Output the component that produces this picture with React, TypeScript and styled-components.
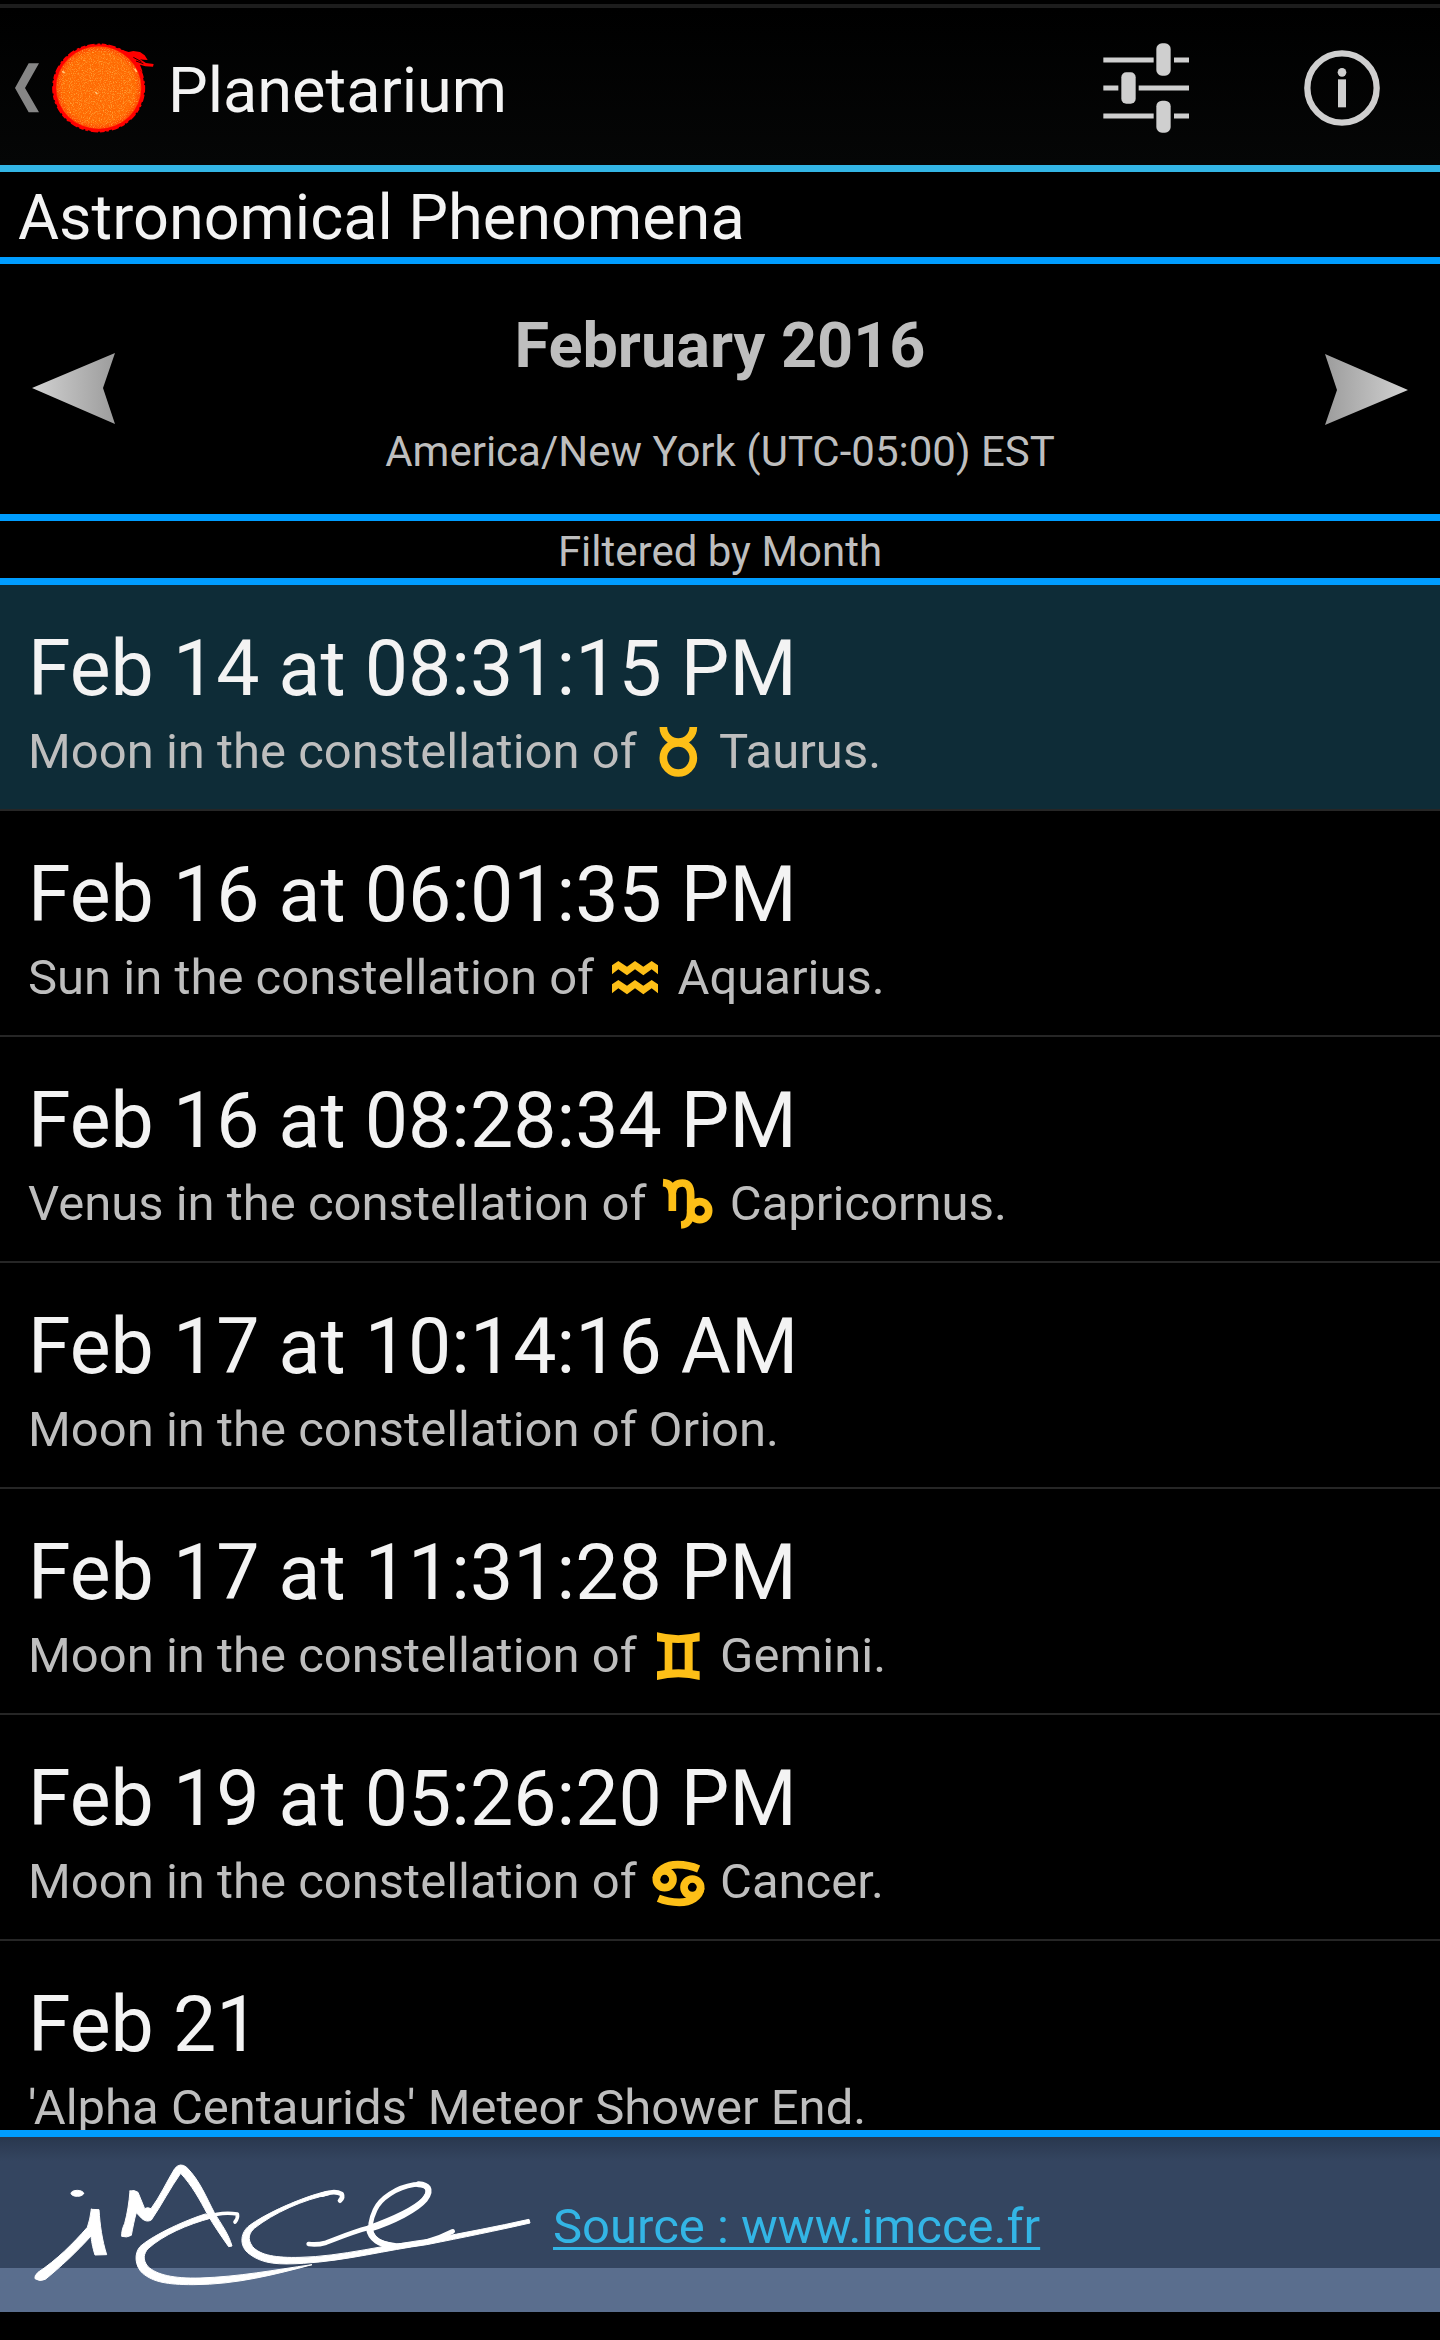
import React from "react";
import styled, { createGlobalStyle } from "styled-components";

const GlobalStyle = createGlobalStyle`
  * {
    box-sizing: border-box;
  }
  body {
    margin: 0;
    background: #000;
    font-family: Roboto, "Noto Sans", sans-serif;
    color: #f3f3f3;
  }
  button {
    margin: 0;
    padding: 0;
    border: 0;
    background: none;
    color: inherit;
    font: inherit;
    cursor: pointer;
  }
  h1, h2, h3, p, ul {
    margin: 0;
    padding: 0;
    font-weight: 400;
  }
  svg {
    display: block;
    flex: none;
  }
`;

const rule = "7px solid #009dff";

const Screen = styled.div`
  display: flex;
  flex-direction: column;
  height: 100vh;
  padding: 4px 0 28px;
`;

const AppBar = styled.header`
  display: flex;
  align-items: center;
  flex: none;
  height: 168px;
  padding-top: 2px;
  border-top: 4px solid #1d1d1d;
  border-bottom: 7px solid #33b5e5;
  background: linear-gradient(#000, #050606);
`;

const BackButton = styled.button`
  display: flex;
  align-items: center;
  gap: 12px;
`;

const AppTitle = styled.h1`
  padding-top: 7px;
  font-size: 63px;
  line-height: 74px;
`;

const Actions = styled.div`
  display: flex;
  align-self: stretch;
  margin-left: auto;
`;

const ActionButton = styled.button`
  display: flex;
  align-items: center;
  justify-content: center;
  width: 196px;
`;

const SectionTitle = styled.h2`
  flex: none;
  padding: 7px 18px 0;
  border-bottom: ${rule};
  font-size: 63px;
  line-height: 78px;
`;

const MonthBar = styled.nav`
  display: flex;
  align-items: center;
  justify-content: space-between;
  flex: none;
  padding: 0 32px;
  border-bottom: ${rule};
  color: #bebebe;
`;

const MonthText = styled.div`
  display: flex;
  flex-direction: column;
  gap: 44px;
  padding: 45px 0 37px;
  text-align: center;
`;

const Month = styled.h3`
  font-size: 63px;
  font-weight: 700;
  line-height: 74px;
`;

const Zone = styled.p`
  font-size: 42px;
  line-height: 50px;
`;

const FilterNote = styled.p`
  flex: none;
  padding-top: 4px;
  border-bottom: ${rule};
  color: #bebebe;
  font-size: 42px;
  line-height: 53px;
  text-align: center;
`;

const EventList = styled.ul`
  flex: 1;
  min-height: 0;
  overflow: hidden;
  list-style: none;
`;

const EventItem = styled.li`
  border-bottom: 2px solid #262626;
`;

const EventButton = styled.button<{ $selected?: boolean }>`
  display: flex;
  flex-direction: column;
  gap: 9px;
  width: 100%;
  padding: 39px 28px 28px;
  background: ${(p) => (p.$selected ? "#0e2c37" : "transparent")};
  text-align: left;
`;

const When = styled.span`
  font-size: 77px;
  line-height: 90px;
`;

const What = styled.span`
  color: #bebebe;
  font-size: 49px;
  line-height: 58px;
`;

const Glyph = styled.svg`
  display: inline-block;
  width: 59px;
  height: 58px;
  margin: -4px 0;
  vertical-align: -8px;
  color: #fdbf17;
`;

const Footer = styled.footer`
  display: flex;
  align-items: center;
  gap: 18px;
  flex: none;
  height: 182px;
  padding-left: 20px;
  border-top: ${rule};
  background: linear-gradient(
    #29374e 0,
    #344560 24px,
    #344560 131px,
    #5a6e8e 131px
  );
`;

const SourceLink = styled.a`
  padding-top: 4px;
  color: #33b5e5;
  font-size: 49px;
  line-height: 58px;
  text-decoration: underline;
  text-decoration-thickness: 3px;
  text-decoration-skip-ink: none;
  text-underline-offset: 4px;
`;

function BackAndSun() {
  return (
    <svg width="156" height="115" viewBox="0 0 468 345" aria-hidden="true">
      <defs>
        <filter id="grain" x="0" y="0" width="1" height="1">
          <feTurbulence type="fractalNoise" baseFrequency="0.3" numOctaves="2" seed="4" />
          <feColorMatrix values="0 0 0 0 1  0 0 0 0 0.58  0 0 0 0 0.1  1.8 0 0 0 -0.85" />
          <feComposite in2="SourceGraphic" operator="in" />
        </filter>
        <radialGradient id="disc">
          <stop offset="0" stopColor="#ff6a04" />
          <stop offset="0.85" stopColor="#ff6a02" />
          <stop offset="1" stopColor="#ff4600" />
        </radialGradient>
      </defs>
      <path d="M86 100h31L75 174l42 73H86L45 174z" fill="#868686" />
      <ellipse cx="296" cy="174" rx="137" ry="131" fill="#f00" />
      <ellipse
        cx="296"
        cy="174"
        rx="137"
        ry="131"
        fill="none"
        stroke="#f00"
        strokeWidth="5"
        strokeDasharray="14 6 22 9 8 5"
      />
      <path
        d="M330 47L360 58L386 66L400 63L420 66L434 76L443 90L430 89L420 88L438 99L461 102L459 110L436 109L420 104L428 125L400 110z"
        fill="#f00"
      />
      <path d="M400 82L424 95M408 93L430 101" stroke="#200" strokeWidth="3" fill="none" />
      <ellipse cx="296" cy="173" rx="128" ry="124" fill="url(#disc)" />
      <ellipse cx="296" cy="173" rx="126" ry="122" fill="#fff" filter="url(#grain)" />
      <path d="M404 116l6 10M286 186l6 6M186 124l8 5" stroke="#ffc678" strokeWidth="5" />
    </svg>
  );
}

function SettingsIcon() {
  return (
    <svg width="88" height="92" viewBox="126 126 264 276" fill="#cfcfcf" aria-hidden="true">
      <path
        d="M130 180h151M342 180h45M130 264h45M236 264h151M130 348h151M342 348h45"
        stroke="#cfcfcf"
        strokeWidth="15"
      />
      <rect x="289" y="130" width="43" height="97" rx="17" />
      <rect x="184" y="217" width="43" height="94" rx="15" />
      <rect x="289" y="302" width="43" height="96" rx="17" />
    </svg>
  );
}

function InfoIcon() {
  return (
    <svg width="78" height="78" viewBox="0 0 234 234" fill="#cfcfcf" aria-hidden="true">
      <circle cx="117" cy="117" r="104" fill="none" stroke="#cfcfcf" strokeWidth="19" />
      <circle cx="117" cy="70" r="13" />
      <path d="M105 91h24v84h-24z" />
    </svg>
  );
}

function Arrow({ next }: { next?: boolean }) {
  const id = next ? "next-fill" : "prev-fill";
  return (
    <svg width="83" height="72" viewBox="0 0 83 72" aria-hidden="true">
      <defs>
        <linearGradient id={id} x1={next ? 1 : 0} x2={next ? 0 : 1}>
          <stop offset="0" stopColor="#d2d2d2" />
          <stop offset="1" stopColor="#9c9c9c" />
        </linearGradient>
      </defs>
      <path d={next ? "M83 37L0 1l12 36L0 72z" : "M0 35L83 0 71 35l12 36z"} fill={`url(#${id})`} />
    </svg>
  );
}

type Sign = "Taurus" | "Aquarius" | "Capricornus" | "Gemini" | "Cancer";

const signs: Record<Sign, { box: string; art: React.ReactNode }> = {
  Taurus: {
    box: "86 36 177 174",
    art: (
      <g fill="none" stroke="currentColor" strokeWidth="23">
        <circle cx="174" cy="144" r="45" />
        <path d="M129 51A45 45 0 0 0 219 51" />
      </g>
    ),
  },
  Aquarius: {
    box: "138 24 177 174",
    art: (
      <g fill="currentColor">
        <path d="M156 76l19-13 26 17 24-17 25 17 25-17 19 13v27l-19-15-25 18-25-18-24 18-26-18-19 15z" />
        <path d="M156 133l19-13 26 17 24-17 25 17 25-17 19 13v27l-19-15-25 18-25-18-24 18-26-18-19 15z" />
      </g>
    ),
  },
  Capricornus: {
    box: "295 702 177 174",
    art: (
      <g fill="none" stroke="currentColor" strokeWidth="23">
        <path d="M307 728C327 729 335 742 335 764V813" />
        <path d="M335 758C337 738 349 729 365 729C383 729 390 742 390 764V815C390 840 380 854 361 855" />
        <circle cx="417" cy="812" r="27" />
      </g>
    ),
  },
  Gemini: {
    box: "266 18 177 174",
    art: (
      <g fill="currentColor">
        <path d="M290 37Q354 54 418 37V64Q354 74 290 64z" />
        <path d="M290 154Q354 142 418 154V180Q354 163 290 180z" />
        <path d="M313 60h23v96h-23zM373 60h24v96h-24z" />
      </g>
    ),
  },
  Cancer: {
    box: "266 696 177 174",
    art: (
      <g fill="none" stroke="currentColor" strokeWidth="23">
        <circle cx="313" cy="778" r="25" />
        <path d="M288 776C290 750 318 734 352 734C376 734 396 739 415 747" />
        <circle cx="396" cy="802" r="25" />
        <path d="M421 804C419 830 391 847 357 847C333 847 313 843 294 835" />
      </g>
    ),
  },
};

function SignGlyph({ sign }: { sign: Sign }) {
  return (
    <Glyph viewBox={signs[sign].box} aria-hidden="true">
      {signs[sign].art}
    </Glyph>
  );
}

function ImcceLogo() {
  return (
    <svg
      width="515"
      height="175"
      viewBox="0 21 1545 525"
      fill="none"
      stroke="#fff"
      strokeLinecap="round"
      strokeLinejoin="round"
      role="img"
      aria-label="IMCCE"
    >
      <g fill="#fff" strokeWidth="3">
        <ellipse cx="172" cy="190" rx="19" ry="9" />
        <path d="M214 238L237 239C240 285 246 330 260 374L225 375C217 350 214 330 213 318C170 366 120 412 76 448Q60 456 45 446Q42 438 54 427C110 390 160 340 202 292Q210 270 214 238z" />
        <path d="M330 183Q343 178 354 187L374 236Q382 230 393 236C420 200 440 155 464 116Q480 96 500 112C540 152 560 205 583 248C605 285 625 310 636 348L626 350C605 320 580 285 562 252C540 210 515 165 482 130C450 175 425 225 394 270Q380 278 366 266L349 248C343 268 338 295 334 316Q320 324 305 319C304 308 308 292 314 280C322 250 327 220 330 183z" />
        <path d="M556 252C480 276 390 322 360 350C342 370 344 408 368 430C400 456 440 464 520 464C650 464 770 432 876 404C760 420 660 440 540 444C460 446 410 434 384 410C366 388 372 370 384 356C430 315 500 284 574 264z" />
        <path d="M920 184C850 200 735 250 684 290C660 312 658 350 688 372C730 404 780 404 850 400C980 392 1100 360 1220 344C1330 322 1430 302 1530 279L1527 268C1430 290 1330 308 1240 326C1100 343 960 380 840 382C770 384 720 376 698 350C680 326 688 308 704 294C760 250 850 208 928 194z" />
      </g>
      <path d="M645 276Q655 264 652 252C625 248 590 250 562 262" strokeWidth="11" />
      <path d="M960 212Q970 202 965 192C950 184 928 186 908 194" strokeWidth="14" />
      <path
        d="M866 342Q890 346 918 338C960 322 1000 305 1044 294C1110 270 1180 240 1210 210C1240 174 1214 160 1182 164C1130 172 1080 205 1065 240C1040 295 1046 335 1115 346C1180 350 1240 334 1298 304"
        strokeWidth="14"
      />
      <path d="M1050 296C1120 274 1190 238 1215 208C1238 176 1222 165 1196 163" strokeWidth="18" />
      <path d="M1048 296C1052 326 1080 344 1120 348" strokeWidth="20" />
    </svg>
  );
}

interface PhenomenonEvent {
  when: string;
  text: string;
  sign?: Sign;
}

const events: PhenomenonEvent[] = [
  { when: "Feb 14 at 08:31:15 PM", text: "Moon in the constellation of ", sign: "Taurus" },
  { when: "Feb 16 at 06:01:35 PM", text: "Sun in the constellation of ", sign: "Aquarius" },
  { when: "Feb 16 at 08:28:34 PM", text: "Venus in the constellation of ", sign: "Capricornus" },
  { when: "Feb 17 at 10:14:16 AM", text: "Moon in the constellation of Orion." },
  { when: "Feb 17 at 11:31:28 PM", text: "Moon in the constellation of ", sign: "Gemini" },
  { when: "Feb 19 at 05:26:20 PM", text: "Moon in the constellation of ", sign: "Cancer" },
  { when: "Feb 21", text: "'Alpha Centaurids' Meteor Shower End." },
];

export default function App() {
  return (
    <>
      <GlobalStyle />
      <Screen>
        <AppBar>
          <BackButton type="button">
            <BackAndSun />
            <AppTitle>Planetarium</AppTitle>
          </BackButton>
          <Actions>
            <ActionButton type="button" aria-label="Settings">
              <SettingsIcon />
            </ActionButton>
            <ActionButton type="button" aria-label="Information">
              <InfoIcon />
            </ActionButton>
          </Actions>
        </AppBar>
        <SectionTitle>Astronomical Phenomena</SectionTitle>
        <MonthBar>
          <button type="button" aria-label="Previous month">
            <Arrow />
          </button>
          <MonthText>
            <Month>February 2016</Month>
            <Zone>America/New York (UTC-05:00) EST</Zone>
          </MonthText>
          <button type="button" aria-label="Next month">
            <Arrow next />
          </button>
        </MonthBar>
        <FilterNote>Filtered by Month</FilterNote>
        <EventList>
          {events.map((event, index) => (
            <EventItem key={event.when}>
              <EventButton type="button" $selected={index === 0}>
                <When>{event.when}</When>
                <What>
                  {event.text}
                  {event.sign && (
                    <>
                      <SignGlyph sign={event.sign} /> {event.sign}.
                    </>
                  )}
                </What>
              </EventButton>
            </EventItem>
          ))}
        </EventList>
        <Footer>
          <ImcceLogo />
          <SourceLink href="http://www.imcce.fr">Source : www.imcce.fr</SourceLink>
        </Footer>
      </Screen>
    </>
  );
}
